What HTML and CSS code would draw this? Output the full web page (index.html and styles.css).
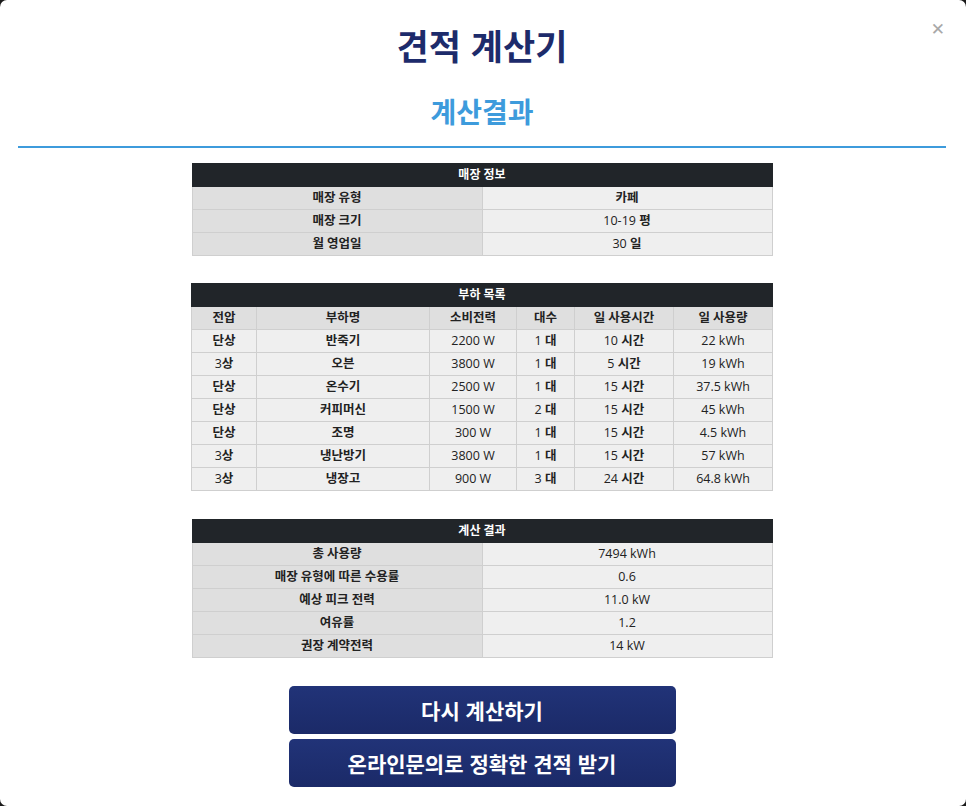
FILE: index.html
```html
<!DOCTYPE html>
<html lang="ko">
<head>
<meta charset="utf-8">
<title>견적 계산기</title>
<link rel="stylesheet" href="styles.css">
</head>
<body>
<div class="modal">
  <button class="close" aria-label="닫기">&#x2715;</button>
  <h1 class="title">견적 계산기</h1>
  <h2 class="subtitle">계산결과</h2>
  <div class="content">
    <table class="tbl two">
      <tr><th colspan="2" class="head">매장 정보</th></tr>
      <tr><td class="lbl">매장 유형</td><td class="val"><b>카페</b></td></tr>
      <tr><td class="lbl">매장 크기</td><td class="val">10-19 <b>평</b></td></tr>
      <tr><td class="lbl">월 영업일</td><td class="val">30 <b>일</b></td></tr>
    </table>

    <table class="tbl loads">
      <colgroup>
        <col style="width:65px"><col style="width:173px"><col style="width:87px"><col style="width:58px"><col style="width:99px"><col style="width:99px">
      </colgroup>
      <tr><th colspan="6" class="head">부하 목록</th></tr>
      <tr class="colhead"><td>전압</td><td>부하명</td><td>소비전력</td><td>대수</td><td>일 사용시간</td><td>일 사용량</td></tr>
      <tr><td><b>단상</b></td><td><b>반죽기</b></td><td>2200 W</td><td>1 <b>대</b></td><td>10 <b>시간</b></td><td>22 kWh</td></tr>
      <tr><td>3<b>상</b></td><td><b>오븐</b></td><td>3800 W</td><td>1 <b>대</b></td><td>5 <b>시간</b></td><td>19 kWh</td></tr>
      <tr><td><b>단상</b></td><td><b>온수기</b></td><td>2500 W</td><td>1 <b>대</b></td><td>15 <b>시간</b></td><td>37.5 kWh</td></tr>
      <tr><td><b>단상</b></td><td><b>커피머신</b></td><td>1500 W</td><td>2 <b>대</b></td><td>15 <b>시간</b></td><td>45 kWh</td></tr>
      <tr><td><b>단상</b></td><td><b>조명</b></td><td>300 W</td><td>1 <b>대</b></td><td>15 <b>시간</b></td><td>4.5 kWh</td></tr>
      <tr><td>3<b>상</b></td><td><b>냉난방기</b></td><td>3800 W</td><td>1 <b>대</b></td><td>15 <b>시간</b></td><td>57 kWh</td></tr>
      <tr><td>3<b>상</b></td><td><b>냉장고</b></td><td>900 W</td><td>3 <b>대</b></td><td>24 <b>시간</b></td><td>64.8 kWh</td></tr>
    </table>

    <table class="tbl two">
      <tr><th colspan="2" class="head">계산 결과</th></tr>
      <tr><td class="lbl">총 사용량</td><td class="val">7494 kWh</td></tr>
      <tr><td class="lbl">매장 유형에 따른 수용률</td><td class="val">0.6</td></tr>
      <tr><td class="lbl">예상 피크 전력</td><td class="val">11.0 kW</td></tr>
      <tr><td class="lbl">여유률</td><td class="val">1.2</td></tr>
      <tr><td class="lbl">권장 계약전력</td><td class="val">14 kW</td></tr>
    </table>

    <div class="actions">
      <button class="btn">다시 계산하기</button>
      <button class="btn">온라인문의로 정확한 견적 받기</button>
    </div>
  </div>
</div>
</body>
</html>
```

FILE: styles.css
```css
html, body {
  margin: 0;
  padding: 0;
  background: #1a1a1a;
}
body {
  font-family: "Noto Sans CJK KR", "Noto Sans", sans-serif;
  width: 966px;
  height: 806px;
  overflow: hidden;
}
.modal {
  position: relative;
  width: 966px;
  height: 806px;
  background: #fff;
  border-radius: 7px;
  box-sizing: border-box;
  padding: 0 20px 0 18px;
}
.close {
  position: absolute;
  top: 17px;
  right: 21px;
  border: 0;
  background: none;
  color: #a8a8a8;
  font-size: 17px;
  font-weight: 700;
  font-family: "DejaVu Sans", sans-serif;
  padding: 0;
  line-height: 24px;
}
.title {
  margin: 0;
  padding-top: 22px;
  text-align: center;
  font-size: 35px;
  line-height: 46px;
  font-weight: 700;
  color: #1d2b6b;
}
.subtitle {
  margin: 0;
  padding-top: 23px;
  padding-bottom: 15px;
  text-align: center;
  font-size: 28px;
  line-height: 40px;
  font-weight: 700;
  color: #3d9bdc;
  border-bottom: 2px solid #3d9bdc;
}
.content {
  display: flex;
  flex-direction: column;
  align-items: center;
  padding-top: 15px;
}
.tbl {
  width: 581px;
  border-collapse: collapse;
  table-layout: fixed;
  font-family: "Open Sans", "Noto Sans CJK KR", sans-serif;
  font-size: 12.5px;
  color: #222;
  margin-bottom: 27px;
}
.tbl th, .tbl td {
  border: 1px solid #cfcfcf;
  height: 22px;
  padding: 0;
  text-align: center;
  line-height: 20px;
}
.tbl .head {
  background: #212529;
  color: #fff;
  font-weight: 700;
  font-size: 12px;
  border-color: #212529;
}
.tbl .lbl {
  background: #dfdfdf;
  font-weight: 700;
  width: 50%;
}
.tbl .val {
  background: #efefef;
}
.tbl b { font-weight: 700; }
.loads { margin-bottom: 28px; }
.loads td { background: #efefef; }
.loads .colhead td {
  background: #dfdfdf;
  font-weight: 700;
}
.actions {
  display: flex;
  flex-direction: column;
  gap: 5px;
  margin-top: 1px;
}
.btn {
  width: 387px;
  height: 48px;
  border: 0;
  border-radius: 5px;
  background: linear-gradient(#213378, #1b2a68);
  color: #fff;
  font-family: "Noto Sans CJK KR", sans-serif;
  font-size: 21px;
  font-weight: 700;
  padding: 0;
}
```
